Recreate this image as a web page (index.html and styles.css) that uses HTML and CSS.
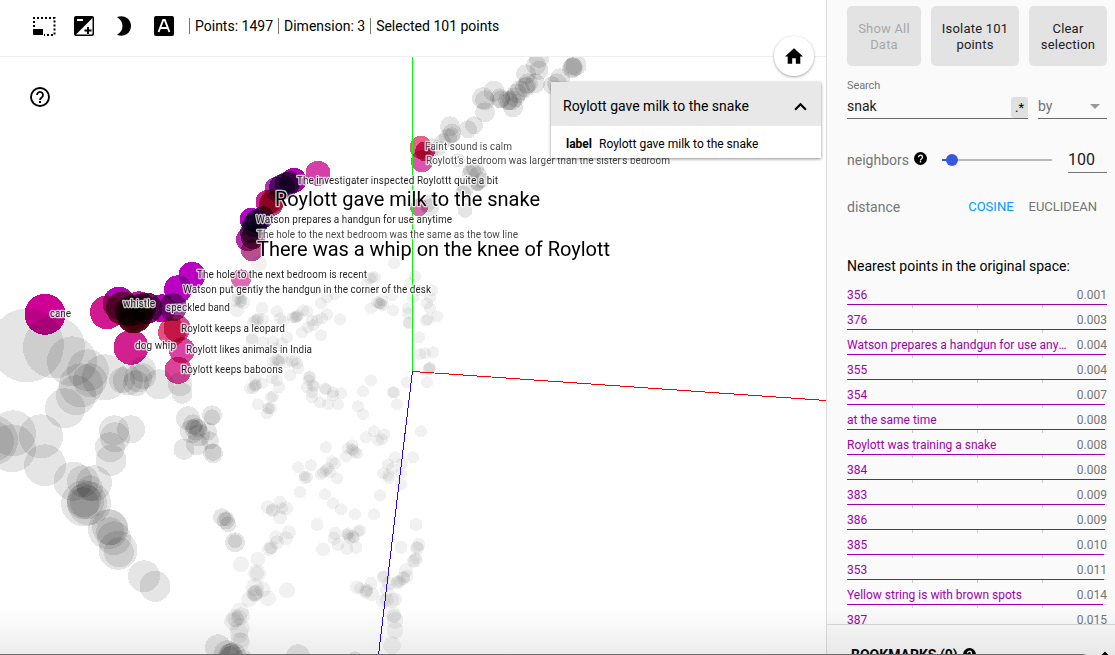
FILE: index.html
```html
<!DOCTYPE html>
<html lang="en">
<head>
<meta charset="utf-8">
<title>Embedding Projector</title>
<link rel="stylesheet" href="styles.css">
</head>
<body>
<div class="app">
  <main class="stage">
    <header class="toolbar">
      <svg class="tool" viewBox="0 0 24 20"><path d="M1 2h21.500v17H12" fill="none" stroke="#000" stroke-width="2" stroke-dasharray="2 2"/><path d="M2 1v12" fill="none" stroke="#000" stroke-width="2" stroke-dasharray="2 2"/><path d="M1 13h10v6H2q-1 0-1-1z"/></svg>
      <svg class="tool" viewBox="2 2 20 20"><path d="M20 2H4a2 2 0 0 0-2 2v16a2 2 0 0 0 2 2h16a2 2 0 0 0 2-2V4a2 2 0 0 0-2-2z"/><path d="M20.500 4v15.500a1 1 0 0 1-1 1H4z" fill="#fff"/><path d="M15 13h2v2.500h2.500v2H17V20h-2v-2.500h-2.500v-2H15z"/><path d="M5 5h6v2H5z" fill="#fff"/></svg>
      <svg class="tool moon" viewBox="0 0 20 20"><path d="M3 1Q9-1 13 2A10 10 0 0 1 13 18Q8 21 3 18.700Q8.500 15.500 8.500 10T3 1z"/></svg>
      <svg class="tool" viewBox="0 0 20 20"><rect width="20" height="20" rx="2"/><path d="M4.600 16L9.200 4h1.600l4.600 12M6.500 12h7" fill="none" stroke="#fff" stroke-width="1.900"/></svg>
      <div class="stats"><span>Points: 1497</span><span>Dimension: 3</span><span>Selected 101 points</span></div>
    </header>
    <section class="plot">
      <svg id="scatter" class="scatter" viewBox="0 57 826 598" width="826" height="598">
        <g id="cloud" transform="translate(0 .3)"></g>
        <g id="selected" class="selected" transform="translate(0 .3)"></g>
        <g fill="none" stroke-width="1" shape-rendering="crispEdges"><path d="M412.500 57V371" stroke="#0f0"/><path d="M413 371.500L826 400.500" stroke="#f00"/><path d="M412.500 371L378.500 655" stroke="#30f"/></g>
        <g id="labels" class="labels"></g>
      </svg>
      <svg class="help" viewBox="0 0 20 20"><circle cx="10" cy="10" r="9" fill="none" stroke="#000" stroke-width="1.900"/><path d="M7 8a3 3 0 1 1 4.700 2.400Q10 11.500 10 13" fill="none" stroke="#000" stroke-width="1.800"/><path d="M9 14h2v2H9z"/></svg>
      <button class="home"><svg viewBox="2 3 20 17"><path d="M10 20v-6h4v6h5v-8h3L12 3 2 12h3v8z"/></svg></button>
      <div class="card">
        <div class="card-head"><span>Roylott gave milk to the snake</span><svg viewBox="0 0 12 8"><path d="M1 7l5-5 5 5" fill="none" stroke="#000" stroke-width="2"/></svg></div>
        <div class="card-row"><b>label</b><span>Roylott gave milk to the snake</span></div>
      </div>
    </section>
  </main>
  <aside class="side">
    <div class="actions"><button class="act off">Show All<br>Data</button><button class="act">Isolate 101<br>points</button><button class="act">Clear<br>selection</button></div>
    <div class="caption">Search</div>
    <div class="search"><div class="field"><span>snak</span><span class="regex">.*</span></div><div class="by"><span>by</span><i></i></div></div>
    <div class="neighbors"><span>neighbors</span><svg class="q" viewBox="0 0 20 20"><circle cx="10" cy="10" r="10"/><path d="M7 8a3 3 0 1 1 4.700 2.400Q10 11.500 10 13M10 14v2" fill="none" stroke="#fff" stroke-width="2"/></svg><div class="slider"><i></i></div><span class="num">100</span></div>
    <div class="distance"><span>distance</span><span class="on">COSINE</span><span class="euc">EUCLIDEAN</span></div>
    <h3 class="nearest">Nearest points in the original space:</h3>
    <div class="list" id="list"></div>
    <div class="bookmarks"><span>BOOKMARKS (0)</span><svg class="q" viewBox="0 0 20 20"><circle cx="10" cy="10" r="10"/><path d="M7 8a3 3 0 1 1 4.700 2.400Q10 11.500 10 13M10 14v2" fill="none" stroke="#fff" stroke-width="2"/></svg><svg class="up" viewBox="0 0 12 8"><path d="M1 7l5-5 5 5" fill="none" stroke="#000" stroke-width="2"/></svg></div>
  </aside>
  <div class="edge"></div>
</div>
<script src="app.js"></script>
</body>
</html>
```
FILE: styles.css
```css
* { box-sizing: border-box; }
body { margin: 0; font-family: Roboto, "Liberation Sans", sans-serif; font-size: 14px; color: #000; background: #fff; }
button { font: inherit; border: 0; padding: 0; }
.app { position: relative; display: flex; width: 1115px; height: 655px; overflow: hidden; }
.stage { width: 826px; display: flex; flex-direction: column; }
.toolbar { height: 57px; border-bottom: 1px solid #eee; display: flex; align-items: center; padding: 0 0 4px 32px; }
.tool { width: 20px; height: 20px; margin-right: 20px; flex: none; }
.tool:first-child { width: 24px; margin-right: 18px; }
.stats { display: flex; line-height: 16px; margin-left: -5px; }
.stats span { border-left: 1px solid #777; padding: 0 5px; white-space: nowrap; }
.plot { position: relative; height: 598px; }
.scatter { display: block; isolation: isolate; }
.selected, .selected circle { mix-blend-mode: multiply; }
.labels text { paint-order: stroke; stroke: rgba(255,255,255,.75); stroke-width: 2.6px; stroke-linejoin: round; fill: #1d1d1d; font-size: 10px; }
.labels .far { fill: #484848; }
.labels .big { font-size: 20px; fill: #000; }
.help { position: absolute; left: 30px; top: 30px; width: 20px; height: 20px; }
.home { position: absolute; left: 774px; top: -21px; width: 40px; height: 40px; border-radius: 50%; background: #fff; box-shadow: 0 1px 3px rgba(0,0,0,.35); display: flex; align-items: center; justify-content: center; }
.home svg { width: 18px; height: 16px; }
.card { position: absolute; left: 551px; top: 25px; width: 270px; height: 76px; background: #fff; box-shadow: 0 1px 3px rgba(0,0,0,.45); }
.card-head { height: 44px; background: #e8e8e8; display: flex; align-items: center; justify-content: space-between; padding: 4px 14px 0 12px; }
.card-head svg { width: 13px; height: 9px; }
.card-row { display: flex; gap: 7px; padding: 11px 15px; font-size: 12px; line-height: 14px; }
.side { width: 289px; background: #fafafa; border-left: 1px solid #dcdcdc; display: flex; flex-direction: column; padding-left: 20px; }
.side > * { flex: none; }
.actions { display: flex; gap: 10px; padding-top: 6px; }
.act { width: 88px; height: 60px; border-radius: 5px; background: #e3e3e3; color: #212121; font-size: 13px; line-height: 16px; letter-spacing: .2px; padding-top: 1px; }
.act:first-child { width: 74px; }
.act:last-child { width: 78px; }
.act.off { color: #a8a8a8; }
.caption { font-size: 11px; line-height: 14px; letter-spacing: -.1px; color: #737373; margin-top: 13px; }
.search { display: flex; gap: 10px; height: 26px; margin-top: 2px; padding-top: 1px; }
.field { width: 181px; height: 23px; border-bottom: 1px solid #6c6c6c; color: #212121; display: flex; justify-content: space-between; line-height: 21px; }
.regex { width: 17px; height: 21px; border-radius: 3px; background: #e0e0e0; text-align: center; color: #000; font-size: 13px; margin-top: 1px; }
.by { width: 69px; height: 23px; border-bottom: 1px solid #6c6c6c; color: #737373; display: flex; justify-content: space-between; line-height: 21px; }
.by i { margin: 8px 7px 0 0; width: 10px; height: 5px; border: 5px solid transparent; border-top-color: #999; border-bottom: 0; }
.neighbors { display: flex; align-items: center; height: 26px; margin-top: 26px; color: #757575; }
.q { width: 13px; height: 13px; margin-left: 5px; flex: none; }
.neighbors .q { margin-bottom: 3px; }
.slider { width: 110px; height: 2px; background: linear-gradient(to right, #3b58d8 8px, #b9b9b9 8px); margin-left: 15px; }
.slider i { display: block; width: 12px; height: 12px; border-radius: 50%; background: #3b58d8; margin: -5px 0 0 4px; }
.num { margin-left: 16px; width: 39px; height: 26px; border-bottom: 1px solid #757575; color: #212121; font-size: 16px; line-height: 26px; }
.distance { display: flex; margin-top: 24px; line-height: 20px; height: 18px; color: #757575; }
.distance .on { color: #009cff; font-size: 13px; margin-left: 68px; }
.distance .euc { font-size: 13px; margin-left: 15px; }
.nearest { margin: 41px 0 0; font-size: 14px; font-weight: 400; line-height: 20px; height: 20px; white-space: nowrap; }
.list { width: 260px; margin-top: 9px; height: 339px; overflow: hidden; }
.row { height: 25px; }
.row-text { display: flex; justify-content: space-between; height: 19px; line-height: 21px; font-size: 12px; }
.row-name { color: #a000b0; width: 220px; height: 19px; white-space: nowrap; overflow: hidden; text-overflow: ellipsis; }
.row-val { color: #757575; }
.bar { height: 1px; background: #ddd; }
.bar i { display: block; height: 1px; background: #a000b0; }
.ticks { display: flex; height: 3px; padding-left: 1px; }
.ticks i { width: 65px; border-right: 1px solid #ccc; }
.bookmarks { border-top: 1px solid #d8d8d8; height: 31px; margin-left: -20px; padding: 22px 8px 0 24px; display: flex; font-weight: 700; font-size: 14px; line-height: 16px; white-space: nowrap; overflow: hidden; }
.bookmarks .q { margin-top: 1px; }
.bookmarks .up { width: 12px; height: 8px; margin: 4px -4px 0 auto; }
.edge { position: absolute; left: 0; top: 608px; width: 1115px; height: 47px; pointer-events: none; background: linear-gradient(to right, #6d6d6d 0 1083px, transparent 1087px) bottom / 100% 1px no-repeat, linear-gradient(to bottom, transparent, rgba(0,0,0,.075)); }
```
FILE: app.js
```js
// Unselected points: x,y,r
const cloud = `27,345,37 54,347,31 72,361,25 88,370,21 90,380,17 81,385,22 105,377,23 76,395,20 65,408,20 128,380,15 122,380,13 138,378,14 143,369,13 143,376,13 136,383,13 159,384,15 182,393,10.5 180,384,12
13,433,23 12,448,24 -6,441,20 -7,440,25 41,436,22 45,465,21 114,430,15 131,429,14 110,447,15 115,437,15 111,460,15.5
73,481,19.5 94,483,18 83,481,16 84,503,23 89,503,22 87,502,17 83,503,16 84,500,17 90,488,13 108,529,20 110,527,18 110,531,14 114,538,17 118,550,19.5 119,552,15 144,576,16 155,586,15.5
188,418,12 212,415,10 212,417,8 193,424,10 196,429,11 192,431,12 194,427,8 198,428,9 199,435,11 197,444,11 210,440,9 184,449,10.5 213,453,10 213,452,8.5 208,431,9
222,517,9 226,520,9 228,524,8 226,519,7 235,542,10 235,541,7 218,647,13 227,653,13 230,655,12 233,655,13 232,656,11 231,655,12 230,656,10 243,658,9 298,656,12 355,658,7
539,57,10.5 536,65,10 539,70,9.5 526,74,10 535,83,10 528,83,10 525,87,10 527,85,9 520,90,10 517,93,10 515,97,10 508,100,10 509,101,9 513,107,10 512,100,10 500,98,10 501,99,9 494,91,10.5 485,100,10 483,98,11 485,112,10 474,125,9 468,129,9 450,126,10 452,133,9.5 452,135,8 448,137,9 443,141,8 432,147,9 438,148,8 576,65,10.5 573,67,10 573,66,9 572,68,10 560,78,10 557,83,10 552,85,9
472,170,9 475,168,9 478,175,9 470,173,8 478,183,7 478,184,7 477,185,6 482,180,8 458,160,7 465,190,8 463,193,8 465,210,7.5 430,207,9 427,203,9`;
const faint = `241,564,8 258,559,7.5 257,573,9 257,573,7 255,587,9 254,593,8 255,595,7 256,592,8 255,593,8 263,589,8 268,598,8 249,599,8 287,590,8 240,611,9 241,616,9 235,618,9 233,621,9 236,619,8 239,617,8 240,628,10 239,633,9.5 240,642,10 241,640,8
273,510,7 268,507,7 280,502,6.5 286,508,7 280,517,7 272,510,6 282,508,6 289,532,7 286,538,7 276,537,7 277,542,7 271,547,7 269,549,7 271,548,6
298,467 311,465 305,477,6.5 304,476,5 307,477 300,492,6.3 325,494 333,503 341,509 355,514 374,514 380,495 317,524,6.5 323,549,7 323,472 326,470 328,468 330,472 335,463 332,461 337,478 321,474 346,456 355,452 352,449 357,453
335,533,6.5 334,538,6.5 338,544,6.5 347,534 348,533 348,536 353,536,6.5 354,537 360,530 358,531 347,548,6.5 356,547,6.5 350,538
395,457 402,463 388,464 392,468 401,473 383,473 389,478 388,475 401,484 413,457 416,524,6.5 401,547,6.5 419,544,6.5 417,548,7 417,547 415,560,7 413,561,6.5 416,558 406,570,7 407,576,6.5 403,578,7 404,577 398,582,7 397,582 400,581 383,577,6.5 384,576 389,583,7 371,583,6.5 357,587,7 360,588 366,590,7 366,592,6.5 367,590 372,594,7 387,590,7 383,601,7 387,600,7 392,600,7.5 395,599,7 393,614,8 394,616,7 395,620,8.5 395,630,8.5 392,645,9
241,300,6.5 240,301,6.5 242,299,5 235,300,6.5 237,310,7 243,302,7 238,297,6.5 262,308,6.5 258,319,6.5 257,320 255,320 263,319 253,322 277,311 280,318 283,321 296,317 297,316 295,317 293,317 298,315 303,310 307,311 302,332 308,327 313,325 317,320 322,318 327,314 312,320 340,319 321,303 327,297 335,294 321,335 371,308 380,303 379,303 381,304 377,302 383,305 382,300 392,295 393,310 370,278 394,263 259,263,8 372,277 375,277 367,283
252,340,6.5 252,338 263,342 273,341 287,337 282,343 275,348 278,360 276,359 279,361 282,358 287,362 292,361 297,363 295,360 275,367 273,362 298,368 290,375 255,385 256,384 255,386 253,388 262,383 250,388 255,378 272,378 279,387 277,380 273,396 271,397 258,404 268,408 269,408 271,408 267,413 309,377 310,376 309,380 307,387 313,385 314,386 312,397 312,392 325,388 326,389 320,402 328,404 338,404 333,395 341,393 333,392 363,391 371,380 358,406 363,414 393,392 394,392 397,404 407,382 421,431 366,437 374,431 378,440 384,434 382,439 326,447 348,448 353,450 352,445
413,297 408,308 408,313 409,323 409,322 420,290 427,303 430,297 430,308 426,320 428,319 437,316 419,337 420,354 425,353 433,352 429,368 429,369 430,367 427,382 410,283 415,276 432,290`;
// Selected points: x, y, r, colour
const selected = [
[45,314,20.5,'#ce0096'],[131,347,17.5,'#d1208f'],[107,312,17,'#d3198f'],[119,303,16.5,'#b400b8'],[139,308,17,'#c010a0'],[134,316,17,'#a01060'],[147,308,15.5,'#761070'],[123,308,17,'#8b185e'],[136,314,17,'#b01c50'],[130,311,15,'#754875'],[133,319,14,'#a04060'],[142,307,14,'#806080'],[162,308,14,'#b400b4'],[173,307,14,'#97439b'],
[192,275,13.5,'#bb00c4'],[178,289,14,'#bb00c4'],[172,332,14,'#e84c84'],[177,328,13.5,'#d9488a'],[182,350,13,'#d944a4'],[178,370,13.5,'#dc429a'],
[318,173,12.5,'#d63ea8'],[294,180,12.5,'#ae00a8'],[287,184,12.5,'#85459b'],[282,187,13,'#783b8e'],[277,189,12.5,'#ad30b9'],[290,182,11,'#a070ac'],[272,201,12,'#f94865'],[268,202,12.5,'#c5209a'],[271,204,12,'#b84888'],[251,219,11.5,'#b800c4'],[257,221,12,'#633589'],[254,225,12,'#74538b'],[263,217,11,'#77408c'],[248,239,12,'#b52aa5'],[253,237,12,'#9a3880'],[252,250,11,'#b85090'],[251,232,11,'#8750a0'],[241,279,10,'#e068b0'],
[421,147,11.5,'#e8608c'],[425,151,10,'#d0307a'],[422,161,11,'#dd52ac'],[419,207,9,'#d66aac']];
// Labels: text, x, baseline, width, class
const labels = [
['Faint sound is calm',425,150,87,'far'],["Roylott's bedroom was larger than the sister's bedroom",426,164,244,'far'],['The investigater inspected Roylottt quite a bit',297,184,201,''],['Watson prepares a handgun for use anytime',256,223,196,''],['The hole to the next bedroom was the same as the tow line',257,238,261,'far'],['The hole to the next bedroom is recent',197,278,170,''],['Watson put gently the handgun in the corner of the desk',183,293,248,''],['speckled band',166,311,64,''],['whistle',123,307,32,''],['cane',50,317,21,''],['Roylott keeps a leopard',181,332,104,''],['dog whip',135,349,41,''],['Roylott likes animals in India',186,353,126,''],['Roylott keeps baboons',181,373,102,''],
['Roylott gave milk to the snake',275,206,265,'big'],['There was a whip on the knee of Roylott',257,256,353,'big']];
const rows = [['356','0.001',260],['376','0.003',259],['Watson prepares a handgun for use anytime','0.004',259],['355','0.004',259],['354','0.007',258],['at the same time','0.008',258],['Roylott was training a snake','0.008',258],['384','0.008',258],['383','0.009',258],['386','0.009',258],['385','0.010',257],['353','0.011',257],['Yellow string is with brown spots','0.014',256],['387','0.015',256]];

const disc = (x, y, r, fill, a) => `<circle cx="${x}" cy="${y}" r="${r}" fill="${fill}" fill-opacity="${a}" shape-rendering="crispEdges"/>`;
const discs = (text, a) => text.trim().split(/\s+/).map(p => { const [x, y, r = 6] = p.split(','); return disc(x, y, r, '#000', a); }).join('');
document.getElementById('cloud').innerHTML = discs(cloud, 0.1) + discs(faint, 0.055);
document.getElementById('selected').innerHTML = selected.map(p => disc(p[0], p[1], p[2], p[3], 1)).join('');
document.getElementById('labels').innerHTML = labels.map(l => `<text x="${l[1]}" y="${l[2]}" textLength="${l[3]}" class="${l[4]}">${l[0]}</text>`).join('');
document.getElementById('list').innerHTML = rows.map(r => `<div class="row"><div class="row-text"><span class="row-name">${r[0]}</span><span class="row-val">${r[1]}</span></div><div class="bar"><i style="width:${r[2]}px"></i></div><div class="ticks"><i></i><i></i><i></i></div></div>`).join('');
```
